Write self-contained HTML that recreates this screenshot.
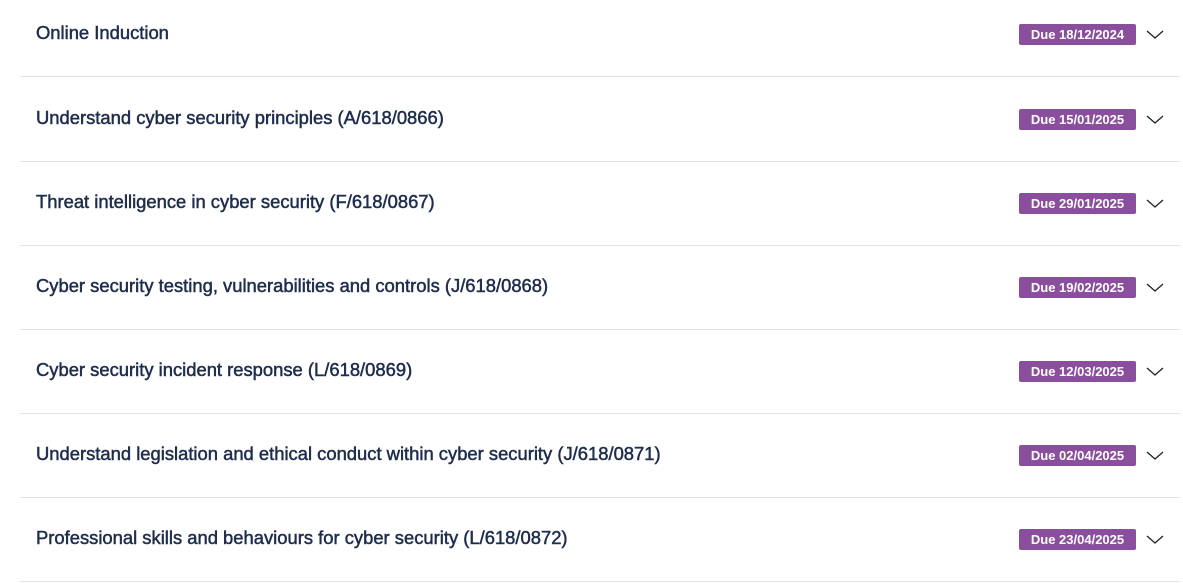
<!DOCTYPE html>
<html><head><meta charset="utf-8"><style>
body{margin:0;width:1183px;height:583px;background:#fff;font-family:"Liberation Sans",sans-serif;position:relative;overflow:hidden}
.r{position:absolute;left:20px;width:1160px;height:84px;border-bottom:1px solid #e3e3e3}
.t{position:absolute;left:16px;top:-1px;height:84px;line-height:84px;font-size:18.4px;color:#1f2d4d;-webkit-text-stroke:0.5px #1f2d4d}
.b{position:absolute;left:999px;top:32px;width:117px;height:21px;line-height:21px;background:#8a4f9c;color:#fff;font-weight:bold;font-size:13px;text-align:center;border-radius:2px}
.c{position:absolute;left:1126px;top:37px}
</style></head><body>
<div class="r" style="top:-8px"><div class="t">Online Induction</div><div class="b">Due 18/12/2024</div><svg class="c" width="18" height="12"><path d="M1 2l8 7 8-7" fill="none" stroke="#222" stroke-width="1.3"/></svg></div>
<div class="r" style="top:77px"><div class="t">Understand cyber security principles (A/618/0866)</div><div class="b">Due 15/01/2025</div><svg class="c" width="18" height="12"><path d="M1 2l8 7 8-7" fill="none" stroke="#222" stroke-width="1.3"/></svg></div>
<div class="r" style="top:161px"><div class="t">Threat intelligence in cyber security (F/618/0867)</div><div class="b">Due 29/01/2025</div><svg class="c" width="18" height="12"><path d="M1 2l8 7 8-7" fill="none" stroke="#222" stroke-width="1.3"/></svg></div>
<div class="r" style="top:245px"><div class="t">Cyber security testing, vulnerabilities and controls (J/618/0868)</div><div class="b">Due 19/02/2025</div><svg class="c" width="18" height="12"><path d="M1 2l8 7 8-7" fill="none" stroke="#222" stroke-width="1.3"/></svg></div>
<div class="r" style="top:329px"><div class="t">Cyber security incident response (L/618/0869)</div><div class="b">Due 12/03/2025</div><svg class="c" width="18" height="12"><path d="M1 2l8 7 8-7" fill="none" stroke="#222" stroke-width="1.3"/></svg></div>
<div class="r" style="top:413px"><div class="t">Understand legislation and ethical conduct within cyber security (J/618/0871)</div><div class="b">Due 02/04/2025</div><svg class="c" width="18" height="12"><path d="M1 2l8 7 8-7" fill="none" stroke="#222" stroke-width="1.3"/></svg></div>
<div class="r" style="top:497px"><div class="t">Professional skills and behaviours for cyber security (L/618/0872)</div><div class="b">Due 23/04/2025</div><svg class="c" width="18" height="12"><path d="M1 2l8 7 8-7" fill="none" stroke="#222" stroke-width="1.3"/></svg></div>
</body></html>
